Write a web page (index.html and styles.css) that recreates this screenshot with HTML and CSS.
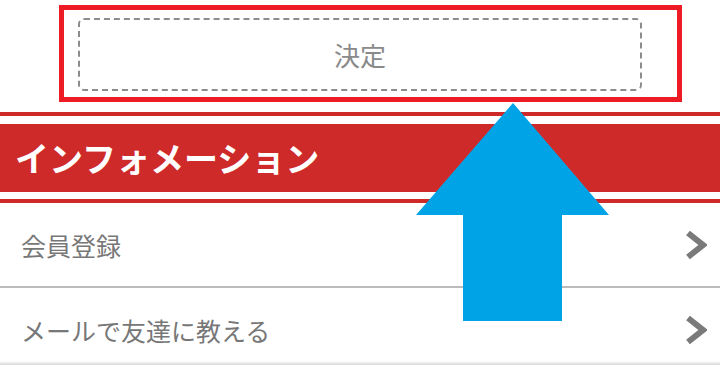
FILE: index.html
```html
<!DOCTYPE html>
<html lang="ja">
<head>
    <meta charset="UTF-8">
    <meta name="viewport" content="width=device-width, initial-scale=1.0">
    <title>インフォメーション</title>
    <link rel="stylesheet" href="styles.css">
</head>
<body>
    <div class="submit-area">
        <button class="submit-btn" type="button">決定</button>
    </div>

    <div class="section-head">
        <h2>インフォメーション</h2>
    </div>

    <ul class="menu">
        <li class="menu-item">
            <span>会員登録</span>
            <svg class="chevron" viewBox="0 0 22 30" width="22" height="30">
                <path d="M3 3 L18 15 L3 27" fill="none" stroke="#7a7a7a" stroke-width="6" stroke-linejoin="miter"/>
            </svg>
        </li>
        <li class="menu-item">
            <span>メールで友達に教える</span>
            <svg class="chevron" viewBox="0 0 22 30" width="22" height="30">
                <path d="M3 3 L18 15 L3 27" fill="none" stroke="#7a7a7a" stroke-width="6" stroke-linejoin="miter"/>
            </svg>
        </li>
    </ul>

    <div class="bottom-shade"></div>

    <!-- annotation overlays -->
    <div class="highlight"></div>
    <svg class="pointer" viewBox="0 0 193 218" width="193" height="218">
        <polygon points="97,0 193,112 146,112 146,218 47,218 47,112 0,112" fill="#00a4e6"/>
    </svg>
</body>
</html>
```

FILE: styles.css
```css
body {
    margin: 0;
    font-family: "Noto Sans CJK JP", "Noto Sans", sans-serif;
    background-color: #fff;
    overflow: hidden;
}

.submit-area {
    height: 112px;
    padding-top: 18px;
    box-sizing: border-box;
}

.submit-btn {
    display: block;
    width: 564px;
    height: 73px;
    margin: 0 auto;
    border: 2px dashed #8c8c8c;
    border-radius: 6px;
    background: #fff;
    color: #8a8a8a;
    font-family: inherit;
    font-size: 26px;
    padding: 0;
}

.section-head {
    border-top: 4px solid #cf2a2a;
    border-bottom: 4px solid #cf2a2a;
    padding: 8px 0 7px;
}

.section-head h2 {
    margin: 0;
    height: 68px;
    background-color: #cf2a2a;
    color: #fff;
    font-size: 34px;
    font-weight: bold;
    line-height: 68px;
    padding-left: 15px;
}

.menu {
    list-style: none;
    margin: 0;
    padding: 0;
}

.menu-item {
    display: flex;
    align-items: center;
    justify-content: space-between;
    height: 83px;
    padding: 0 13px 0 21px;
    color: #777;
    font-size: 25px;
}

.menu-item + .menu-item {
    border-top: 2px solid #bbb;
}

.bottom-shade {
    position: fixed;
    left: 0;
    right: 0;
    bottom: 0;
    height: 4px;
    background: linear-gradient(#fff, #d8d8d8);
}

.highlight {
    position: absolute;
    left: 59px;
    top: 5px;
    width: 613px;
    height: 87px;
    border: 5px solid #ed1c24;
}

.pointer {
    position: absolute;
    left: 416px;
    top: 103px;
}
```
